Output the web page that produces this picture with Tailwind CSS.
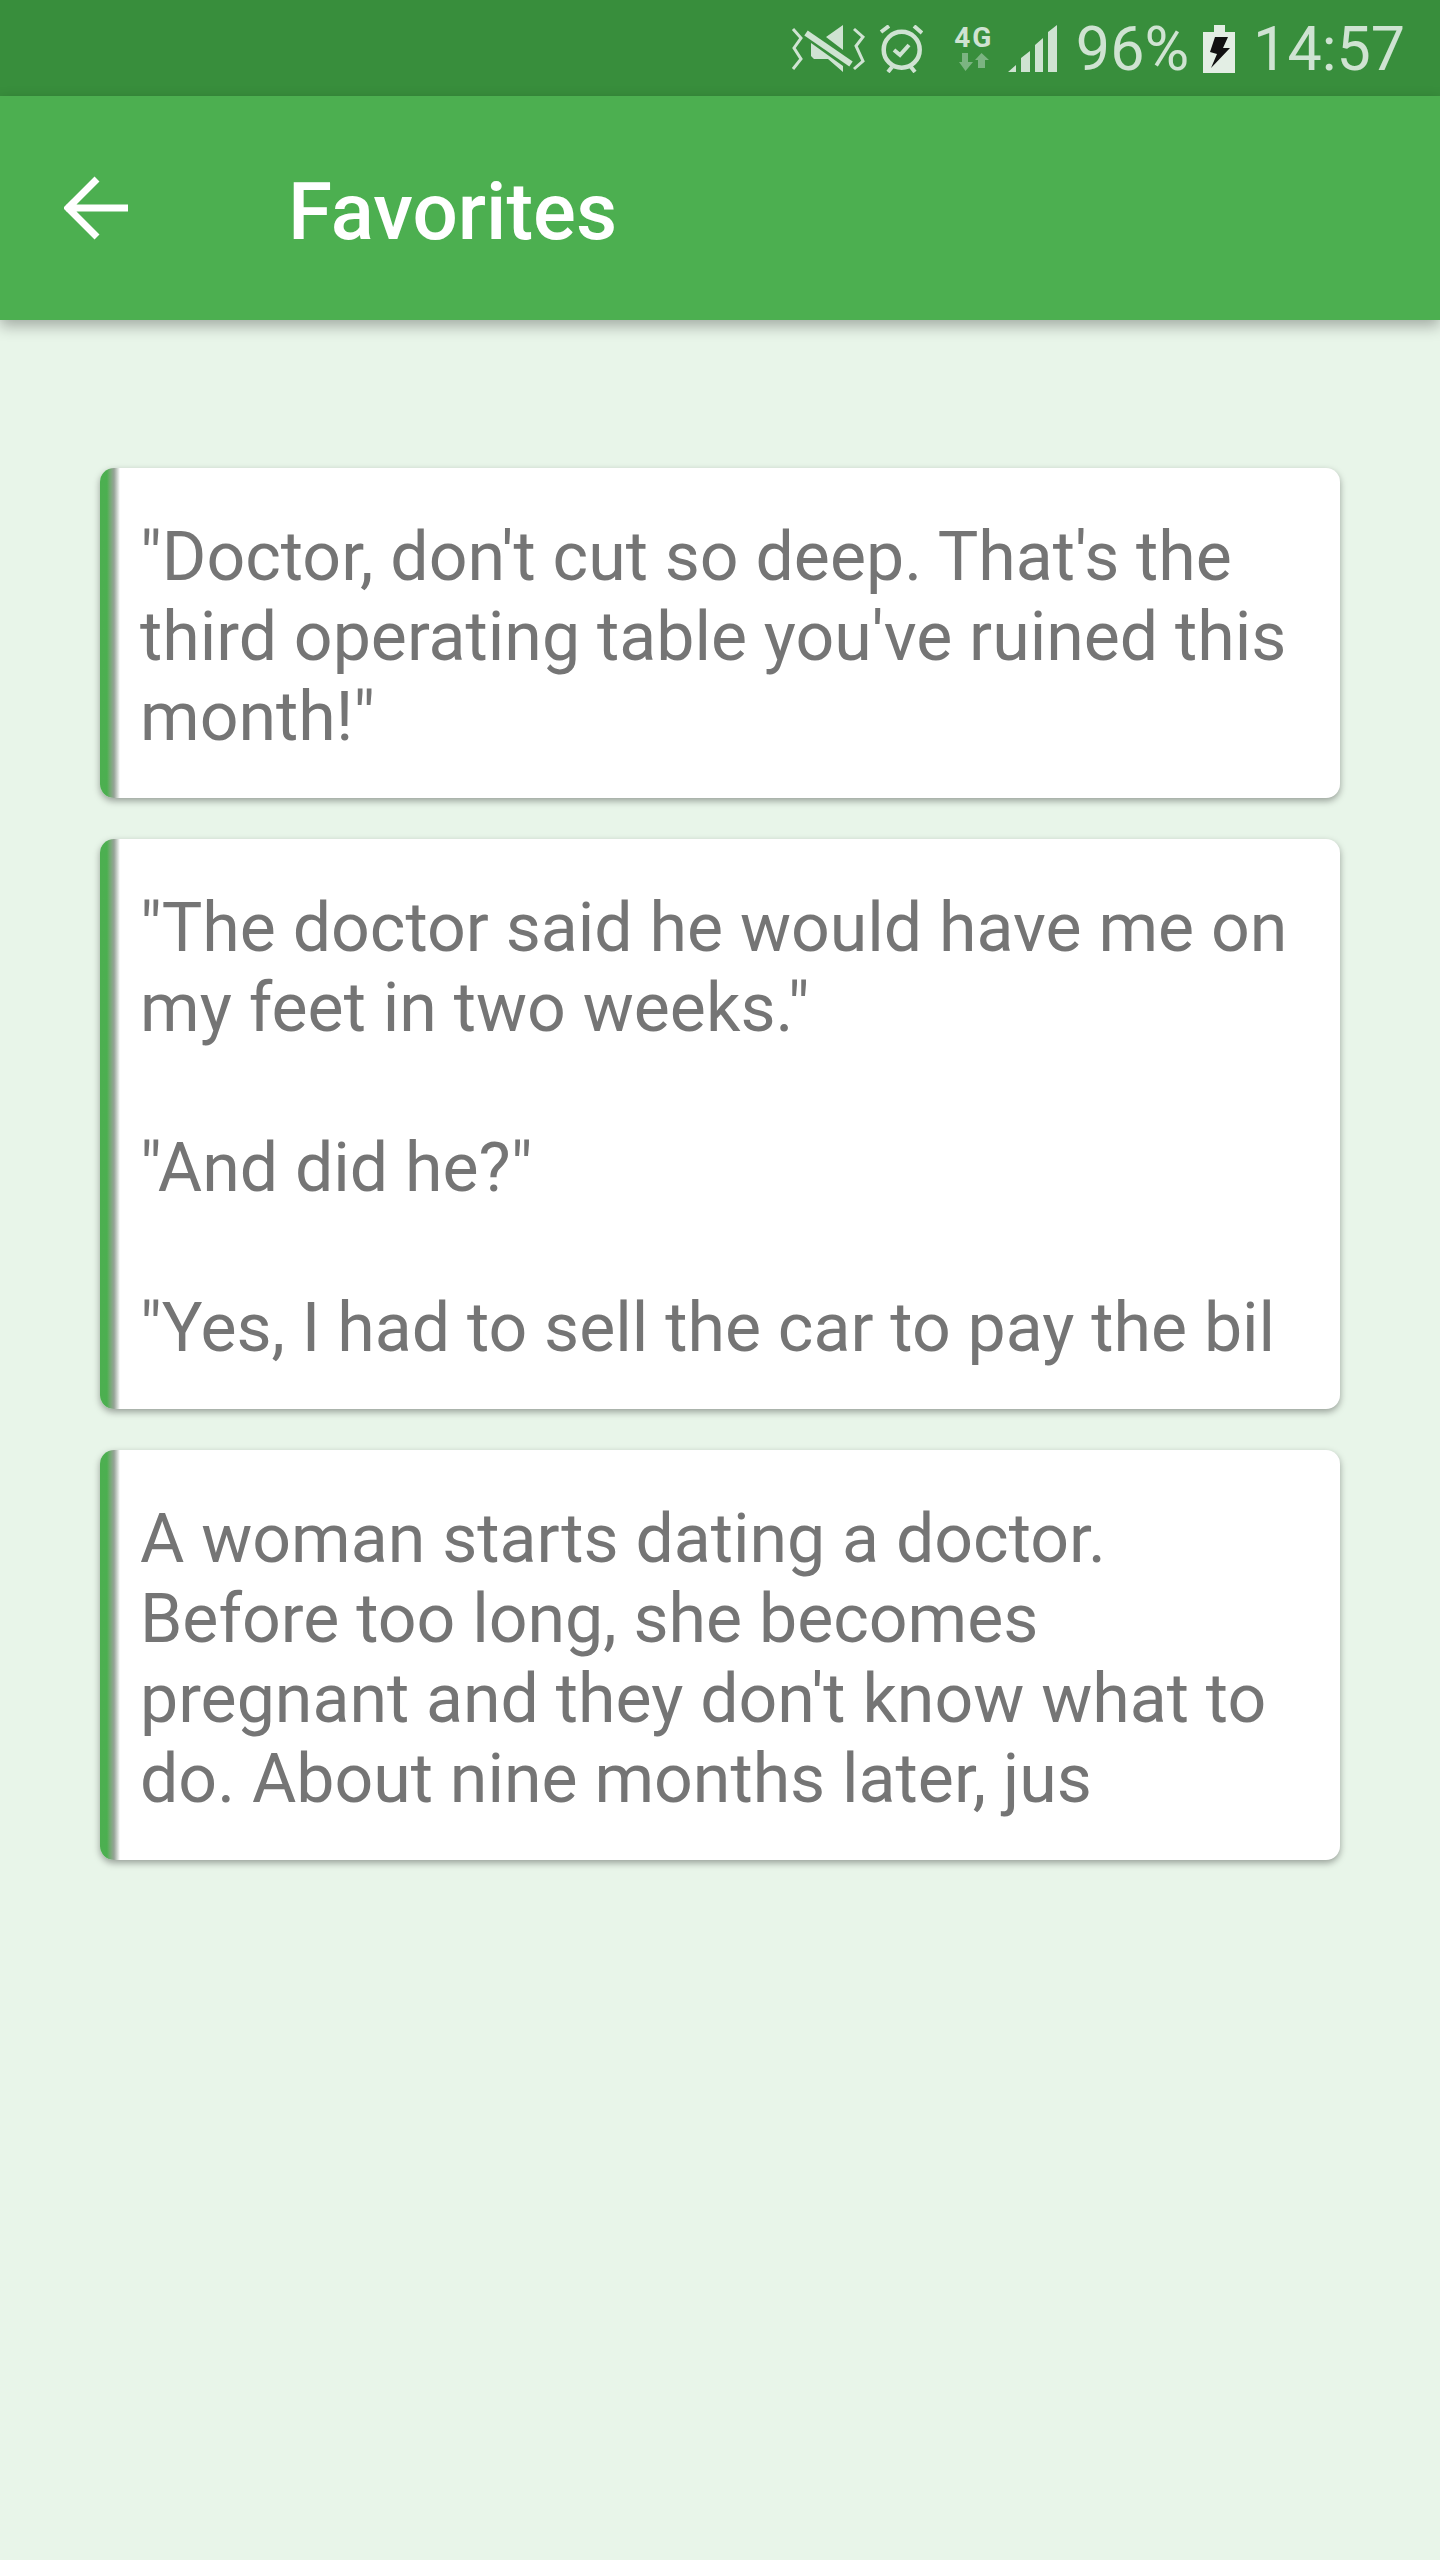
<!DOCTYPE html>
<html lang="en">
  <head>
    <meta charset="UTF-8" />
    <title>Favorites</title>
    <script src="https://cdn.jsdelivr.net/npm/@tailwindcss/browser@4"></script>
  </head>
  <body class="bg-[#e8f5e9] min-h-[2560px] font-['Roboto',sans-serif]">
    <!-- status bar -->
    <div class="h-[96px] bg-[#388e3c] flex items-center justify-end pr-[35px] text-[#cfe3d2] text-[61px] leading-none">
      <svg class="mr-[14px] mt-[1px]" width="74" height="48" viewBox="0 0 74 48" fill="none">
        <path d="M2 4l8 9-7 10 7 11-8 10M63 4l9 8-7 9 7 15-9 8" stroke="#cfe3d2" stroke-width="3" />
        <path d="M35 12L52 0v25zM20 18l32 23v6L37 34H23l-3-3z" fill="#cfe3d2" />
        <path d="M15 8l45 31" stroke="#cfe3d2" stroke-width="6" />
      </svg>
      <svg class="mr-[32px] mt-[1px]" width="44" height="48" viewBox="0 0 44 48" fill="none" stroke="#cfe3d2">
        <circle cx="22.700" cy="24.700" r="18" stroke-width="4.500" />
        <path d="M15 25l6 5 9-10" stroke-width="4" />
        <path d="M2 7l8-6M35 1l8 7M9 47l4-5M36 47l-4-5" stroke-width="4" />
      </svg>
      <div class="mr-[15px] w-[38px] h-[48px] mt-[5px] flex flex-col items-center">
        <span class="text-[28px] font-bold leading-[22px] tracking-[2px]">4G</span>
        <svg class="mt-[4px]" width="30" height="18" viewBox="0 0 30 18">
          <path d="M3 0h6v9h5L6.500 18 0 9h3z" fill="#7cb482" />
          <path d="M19 15h7V7h4L22.500 0 16 7h3z" fill="#7cb482" />
        </svg>
      </div>
      <svg class="mr-[19px] mt-[1px]" width="49" height="48" viewBox="0 0 49 48" fill="#cfe3d2">
        <path d="M0 47l8-7v7zM13 47V33l9-7v21zM27 47V20l8-7v34zM40 47V7l9-7v47z" />
      </svg>
      <span class="mt-[2px]">96%</span>
      <svg class="ml-[14px] mr-[18px] mt-[1px]" width="32" height="48" viewBox="0 0 32 48">
        <path d="M11 0h11v7h10v41H0V7h11z" fill="#e3eee4" />
        <path d="M12 12h13l-5 11h7L8 43l6-14-7-2z" fill="#111" />
      </svg>
      <span class="mt-[2px]">14:57</span>
    </div>

    <!-- app bar -->
    <div class="h-[224px] bg-[#4caf50] flex items-center shadow-[0_6px_14px_rgba(0,0,0,0.3)] relative">
      <svg class="ml-[64px]" width="64" height="64" viewBox="0 0 64 64" fill="none" stroke="#fff" stroke-width="7">
        <path d="M2 32h62M33 3L4 32l29 29" />
      </svg>
      <h1 class="ml-[160px] mt-[8px] text-white text-[80px] font-medium leading-none">Favorites</h1>
    </div>

    <!-- favorites list -->
    <div class="pt-[148px] px-[100px] flex flex-col gap-[41px]">
      <div class="flex bg-white rounded-[14px] overflow-hidden shadow-[0_3px_7px_rgba(0,0,0,0.35)]">
        <div class="w-[20px] shrink-0 bg-linear-to-r from-[#4caf50] from-35% via-[#96a397] via-70% to-white"></div>
        <p class="pl-[20px] pr-[36px] pt-[49px] pb-[41px] text-[#757575] text-[68px] leading-[80px] whitespace-pre-line">"Doctor, don't cut so deep. That's the third operating table you've ruined this month!"</p>
      </div>
      <div class="flex bg-white rounded-[14px] overflow-hidden shadow-[0_3px_7px_rgba(0,0,0,0.35)]">
        <div class="w-[20px] shrink-0 bg-linear-to-r from-[#4caf50] from-35% via-[#96a397] via-70% to-white"></div>
        <p class="pl-[20px] pr-[36px] pt-[49px] pb-[41px] text-[#757575] text-[68px] leading-[80px] whitespace-pre-line">"The doctor said he would have me on my feet in two weeks."

"And did he?"

"Yes, I had to sell the car to pay the bil</p>
      </div>
      <div class="flex bg-white rounded-[14px] overflow-hidden shadow-[0_3px_7px_rgba(0,0,0,0.35)]">
        <div class="w-[20px] shrink-0 bg-linear-to-r from-[#4caf50] from-35% via-[#96a397] via-70% to-white"></div>
        <p class="pl-[20px] pr-[36px] pt-[49px] pb-[41px] text-[#757575] text-[68px] leading-[80px] whitespace-pre-line">A woman starts dating a doctor. Before too long, she becomes pregnant and they don't know what to do. About nine months later, jus</p>
      </div>
    </div>
  </body>
</html>
